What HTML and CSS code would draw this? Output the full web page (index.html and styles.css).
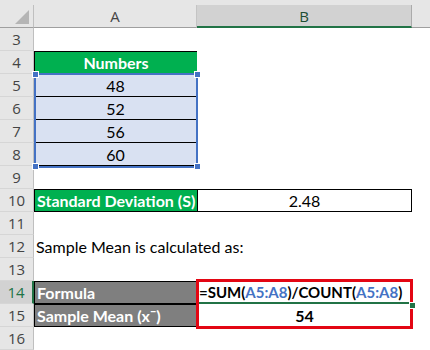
FILE: index.html
```html
<!DOCTYPE html>
<html>
<head>
<meta charset="utf-8">
<link rel="stylesheet" href="styles.css">
</head>
<body>
<div class="sheet">
  <div class="topstrip"></div>
  <div class="row hdr">
    <div class="corner"><div class="tri"></div></div>
    <div class="ch ca">A</div>
    <div class="ch cb sel">B</div>
    <div class="ch rest"></div>
  </div>
  <div class="row"><div class="rh">3</div><div class="c ca"></div><div class="c cb"></div></div>
  <div class="row"><div class="rh">4</div><div class="c ca green center bold box">Numbers</div><div class="c cb"></div></div>
  <div class="row"><div class="rh">5</div><div class="c ca blue center bl">48</div><div class="c cb"></div></div>
  <div class="row"><div class="rh">6</div><div class="c ca blue center bl">52</div><div class="c cb"></div></div>
  <div class="row"><div class="rh">7</div><div class="c ca blue center bl">56</div><div class="c cb"></div></div>
  <div class="row"><div class="rh">8</div><div class="c ca blue center bl">60</div><div class="c cb"></div></div>
  <div class="row"><div class="rh">9</div><div class="c ca"></div><div class="c cb"></div></div>
  <div class="row"><div class="rh">10</div><div class="c ca green bold box">Standard Deviation (S)</div><div class="c cb center box boxr">2.48</div></div>
  <div class="row"><div class="rh">11</div><div class="c ca"></div><div class="c cb"></div></div>
  <div class="row"><div class="rh">12</div><div class="c ca overflow">Sample Mean is calculated as:</div><div class="c cb"></div></div>
  <div class="row"><div class="rh">13</div><div class="c ca"></div><div class="c cb"></div></div>
  <div class="row"><div class="rh active">14</div><div class="c ca gray bold box">Formula</div><div class="c cb bold formula">=SUM(<span class="ref">A5:A8</span>)/COUNT(<span class="ref">A5:A8</span>)</div></div>
  <div class="row"><div class="rh">15</div><div class="c ca gray bold box boxb">Sample Mean (x&#x00AF;)</div><div class="c cb bold center">54</div></div>
  <div class="row"><div class="rh">16</div><div class="c ca"></div><div class="c cb"></div></div>

  <div class="selection"></div>
  <div class="handle h-tl"></div>
  <div class="handle h-tr"></div>
  <div class="handle h-bl"></div>
  <div class="handle h-br"></div>
  <div class="redbox"></div>
  <div class="fill"></div>
</div>
</body>
</html>
```
FILE: styles.css
```css
html, body {
  margin: 0;
  padding: 0;
  background: #fff;
}
.sheet {
  position: relative;
  width: 430px;
  height: 350px;
  overflow: hidden;
  font-family: Lato, "Liberation Sans", sans-serif;
  font-size: 16px;
  color: #000;
}
.topstrip {
  height: 5px;
  background: #e6e6e6;
}
.row {
  display: flex;
  height: 23px;
}
.corner {
  width: 33px;
  height: 22px;
  background: #e6e6e6;
  border-right: 1px solid #bfbfbf;
  border-bottom: 1px solid #9f9f9f;
  position: relative;
}
.tri {
  position: absolute;
  right: 4px;
  bottom: 3px;
  width: 0;
  height: 0;
  border-left: 14px solid transparent;
  border-bottom: 14px solid #b5b5b5;
}
.ch {
  box-sizing: border-box;
  height: 23px;
  background: #e6e6e6;
  border-bottom: 1px solid #9f9f9f;
  border-right: 1px solid #c4c4c4;
  display: flex;
  align-items: center;
  justify-content: center;
  color: #444;
  font-family: "Open Sans", Lato, sans-serif;
  font-size: 15px;
}
.ch.sel {
  background: #d2d2d2;
  color: #1e4e33;
  border-bottom: 2px solid #217346;
  border-right: 1px solid #ababab;
}
.ch.rest {
  flex: 1;
  border-right: none;
}
.ca { width: 163px; }
.cb { width: 215px; }
.rh {
  box-sizing: border-box;
  width: 34px;
  height: 23px;
  background: #e6e6e6;
  border-right: 1px solid #bfbfbf;
  border-bottom: 1px solid #d6d6d6;
  display: flex;
  align-items: center;
  justify-content: center;
  color: #444;
  font-family: "Open Sans", Lato, sans-serif;
  font-size: 15px;
}
.rh.active {
  background: #d2d2d2;
  color: #217346;
  border-right: 2px solid #217346;
}
.c {
  box-sizing: border-box;
  height: 23px;
  display: flex;
  align-items: center;
  padding: 0 2px;
  white-space: nowrap;
}
.center { justify-content: center; }
.bold { font-weight: 700; }
.green {
  background: #00b050;
  color: #fff;
}
.gray {
  background: #7f7f7f;
  color: #fff;
}
.blue {
  background: #d9e1f2;
}
.box {
  border-top: 1px solid #000;
  border-left: 1px solid #000;
  border-bottom: 1px solid #000;
}
.boxr { border-right: 1px solid #000; }
.boxb { border-bottom: 1px solid #000; }
.bl {
  border-bottom: 1px solid #000;
}
.overflow { overflow: visible; }
.formula {
  border-bottom: 2px solid #217346;
  padding-left: 2px;
  font-size: 15px;
}
.ref { color: #4472c4; }

.selection {
  position: absolute;
  left: 34px;
  top: 73px;
  width: 160px;
  height: 91px;
  border: 2px solid #4472c4;
  pointer-events: none;
}
.handle {
  position: absolute;
  width: 5px;
  height: 5px;
  background: #4472c4;
  border: 1px solid #fff;
}
.h-tl { left: 32px; top: 71px; }
.h-tr { left: 194px; top: 71px; }
.h-bl { left: 32px; top: 163px; }
.h-br { left: 194px; top: 163px; }
.redbox {
  position: absolute;
  left: 196px;
  top: 279px;
  width: 211px;
  height: 44px;
  border: 3px solid #e30613;
}
.fill {
  position: absolute;
  left: 409px;
  top: 302px;
  width: 5px;
  height: 5px;
  background: #217346;
  border: 1px solid #fff;
}
```
